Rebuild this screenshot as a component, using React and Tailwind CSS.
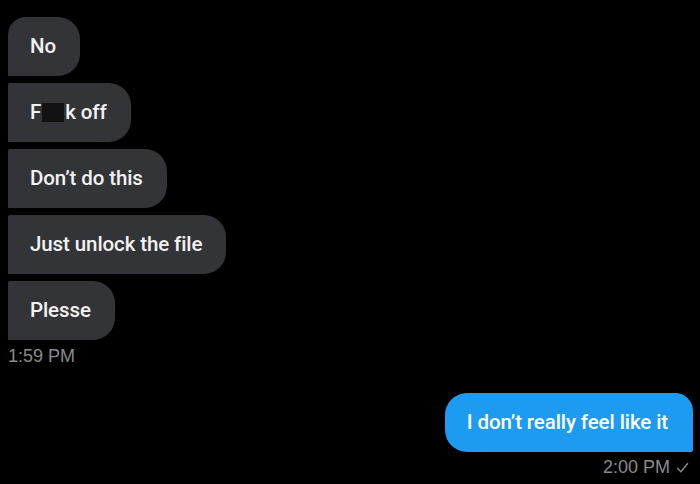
export default function App() {
  const received = ['No', 'censored', "Don’t do this", 'Just unlock the file', 'Plesse']

  return (
    <div
      className="w-[700px] h-[484px] bg-black flex flex-col pl-2 pr-[7px] pt-[17px] overflow-hidden"
      style={{ fontFamily: 'Roboto, "Liberation Sans", Arial, sans-serif' }}
    >
      <div className="flex flex-col items-start gap-[7px]">
        {received.map((msg, i) => (
          <div
            key={i}
            className={
              'h-[59px] flex items-center pl-[22px] pr-[24px] bg-[#333437] text-[#f2f2f2] text-[20.5px] font-medium tracking-[-0.1px] rounded-r-[22px] ' +
              (i === 0 ? 'rounded-tl-[18px]' : 'rounded-tl-[2px]')
            }
          >
            {msg === 'censored' ? (
              <span className="flex items-center">
                F<span className="inline-block w-[22px] h-[19px] bg-[#121212] mx-[1px]"></span>k off
              </span>
            ) : (
              msg
            )}
          </div>
        ))}
      </div>
      <div className="mt-[6px] text-[18px] text-[#8a8a8a] leading-[20px]" style={{ fontFamily: '"Liberation Sans", Arial, sans-serif' }}>
        1:59 PM
      </div>

      <div className="flex flex-col items-end mt-[27px]">
        <div className="h-[59px] flex items-center pl-[22px] pr-[25px] bg-[#1d9bf0] text-white text-[20.5px] font-medium tracking-[-0.1px] rounded-l-[22px] rounded-tr-[18px] rounded-br-[2px]">
          I don’t really feel like it
        </div>
        <div
          className="mt-[5px] flex items-center gap-[5px] text-[18px] text-[#8a8a8a] leading-[20px] pr-[3px]"
          style={{ fontFamily: '"Liberation Sans", Arial, sans-serif' }}
        >
          2:00 PM
          <svg width="15" height="15" viewBox="0 0 14 14" fill="none" stroke="#8a8a8a" strokeWidth="1.3">
            <path d="M2 7.5 L5.5 11 L12 3" />
          </svg>
        </div>
      </div>
    </div>
  )
}
